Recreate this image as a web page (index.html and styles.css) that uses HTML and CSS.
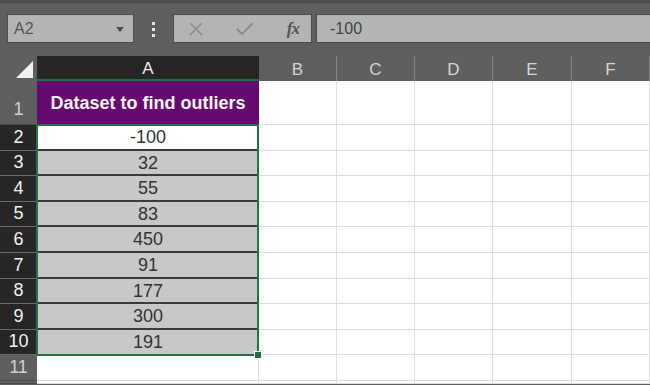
FILE: index.html
```html
<!DOCTYPE html>
<html lang="en">
<head>
    <meta charset="UTF-8">
    <title>Outliers</title>
    <link rel="stylesheet" href="styles.css">
</head>
<body>
    <!-- Name box + formula bar -->
    <div class="toolbar">
        <div class="name-box">
            <span>A2</span>
            <svg class="caret" width="8" height="5" viewBox="0 0 8 5"><path d="M0 0H8L4 5Z" fill="#4a4a4a"/></svg>
        </div>
        <div class="dots"><i></i><i></i><i></i></div>
        <div class="fx-buttons">
            <svg width="16" height="16" viewBox="0 0 16 16"><path d="M2 2L14 14M14 2L2 14" stroke="#8c8c8c" stroke-width="1.6"/></svg>
            <svg width="18" height="16" viewBox="0 0 18 16"><path d="M1 8L6 13L17 2" stroke="#8c8c8c" stroke-width="1.8" fill="none"/></svg>
            <span class="fx">fx</span>
        </div>
        <div class="formula">-100</div>
    </div>

    <div class="sheet">
        <div class="corner"><span></span></div>
        <div class="col-head active">A</div>
        <div class="col-head">B</div>
        <div class="col-head">C</div>
        <div class="col-head">D</div>
        <div class="col-head">E</div>
        <div class="col-head">F</div>

        <div class="row-head tall">1</div>
        <div class="cell title">Dataset to find outliers</div>
        <div class="cell tall"></div><div class="cell tall"></div><div class="cell tall"></div><div class="cell tall"></div><div class="cell tall"></div>

        <div class="row-head sel">2</div>
        <div class="cell val first">-100</div>
        <div class="cell"></div><div class="cell"></div><div class="cell"></div><div class="cell"></div><div class="cell"></div>

        <div class="row-head sel">3</div>
        <div class="cell val">32</div>
        <div class="cell"></div><div class="cell"></div><div class="cell"></div><div class="cell"></div><div class="cell"></div>

        <div class="row-head sel">4</div>
        <div class="cell val">55</div>
        <div class="cell"></div><div class="cell"></div><div class="cell"></div><div class="cell"></div><div class="cell"></div>

        <div class="row-head sel">5</div>
        <div class="cell val">83</div>
        <div class="cell"></div><div class="cell"></div><div class="cell"></div><div class="cell"></div><div class="cell"></div>

        <div class="row-head sel">6</div>
        <div class="cell val">450</div>
        <div class="cell"></div><div class="cell"></div><div class="cell"></div><div class="cell"></div><div class="cell"></div>

        <div class="row-head sel">7</div>
        <div class="cell val">91</div>
        <div class="cell"></div><div class="cell"></div><div class="cell"></div><div class="cell"></div><div class="cell"></div>

        <div class="row-head sel">8</div>
        <div class="cell val">177</div>
        <div class="cell"></div><div class="cell"></div><div class="cell"></div><div class="cell"></div><div class="cell"></div>

        <div class="row-head sel">9</div>
        <div class="cell val">300</div>
        <div class="cell"></div><div class="cell"></div><div class="cell"></div><div class="cell"></div><div class="cell"></div>

        <div class="row-head sel">10</div>
        <div class="cell val last">191</div>
        <div class="cell"></div><div class="cell"></div><div class="cell"></div><div class="cell"></div><div class="cell"></div>

        <div class="row-head">11</div>
        <div class="cell"></div><div class="cell"></div><div class="cell"></div><div class="cell"></div><div class="cell"></div><div class="cell"></div>

        <div class="row-head"></div>
        <div class="cell"></div><div class="cell"></div><div class="cell"></div><div class="cell"></div><div class="cell"></div><div class="cell"></div>

        <!-- selection outline over A2:A10 -->
        <div class="selection"><span class="handle"></span></div>
    </div>
</body>
</html>
```

FILE: styles.css
```css
body {
    margin: 0;
    width: 650px;
    height: 385px;
    overflow: hidden;
    background: #5e5e5e;
    font-family: "Liberation Sans", Arial, sans-serif;
}

/* formula bar */
.toolbar {
    height: 56px;
    border-top: 3px solid #4e4e4e;
    background: #5f5f5f;
    display: flex;
    align-items: flex-start;
    padding: 11px 0 0 7px;
    box-sizing: border-box;
}
.name-box {
    width: 127px;
    height: 29px;
    box-sizing: border-box;
    border: 1px solid #4c4c4c;
    background: #b4b4b4;
    display: flex;
    align-items: center;
    justify-content: space-between;
    padding: 0 9px 0 6px;
    color: #555;
    font-size: 16px;
}
.caret { margin-top: 1px; }
.dots {
    width: 39px;
    display: flex;
    flex-direction: column;
    align-items: center;
    gap: 3px;
    padding-top: 8px;
}
.dots i {
    width: 3px;
    height: 3px;
    background: #e6e6e6;
}
.fx-buttons {
    width: 139px;
    height: 29px;
    box-sizing: border-box;
    border: 1px solid #4c4c4c;
    background: #b4b4b4;
    display: flex;
    align-items: center;
    justify-content: space-between;
    padding: 0 12px 0 14px;
}
.fx {
    font-family: "Liberation Serif", "Times New Roman", serif;
    font-style: italic;
    font-weight: bold;
    font-size: 17px;
    color: #555;
    letter-spacing: -1px;
}
.formula {
    flex: 1;
    margin-left: 4px;
    height: 29px;
    box-sizing: border-box;
    border: 1px solid #4c4c4c;
    border-right: none;
    background: #b4b4b4;
    color: #444;
    font-size: 16px;
    line-height: 27px;
    padding-left: 13px;
}

/* grid */
.sheet {
    position: relative;
    display: grid;
    grid-template-columns: 37px 222px 78px 78px 78px 79px 78px;
    grid-template-rows: 25px 44px repeat(10, 25.6px);
    background: #fff;
}
.corner {
    background: #5f5f5f;
    position: relative;
}
.corner span {
    position: absolute;
    right: 4px;
    bottom: 3px;
    width: 0;
    height: 0;
    border-left: 17px solid transparent;
    border-bottom: 17px solid #f2f2f2;
}
.col-head {
    background: #5f5f5f;
    color: #d4d4d4;
    font-size: 17px;
    display: flex;
    align-items: center;
    justify-content: center;
    border-right: 1px solid #848484;
    padding-top: 2px;
}
.col-head.active {
    background: #262626;
    color: #ececec;
    border-right: none;
    border-bottom: 2px solid #217346;
}
.row-head {
    background: #5f5f5f;
    color: #d0d0d0;
    font-size: 18px;
    display: flex;
    align-items: flex-end;
    justify-content: center;
    padding-bottom: 2px;
    border-bottom: 1px solid #4a4a4a;
    box-sizing: border-box;
}
.row-head.tall { padding-bottom: 4px; }
.row-head.sel {
    background: #262626;
    color: #f2f2f2;
    border-bottom: 1px solid #6a6a6a;
}
.cell {
    border-right: 1px solid #dcdcdc;
    border-bottom: 1px solid #dcdcdc;
    box-sizing: border-box;
}
.cell.title {
    background: #660a70;
    color: #f6f6f6;
    font-weight: bold;
    font-size: 18px;
    display: flex;
    align-items: center;
    justify-content: center;
    border: none;
}
.cell.val {
    background: #c8c8c8;
    color: #333;
    font-size: 18px;
    text-align: center;
    line-height: 25px;
    border-right: none;
    border-bottom: 2px solid #3a3a3a;
}
.cell.first { background: #fff; }
.cell.last { border-bottom: none; }

.selection {
    position: absolute;
    left: 36px;
    top: 68px;
    width: 223px;
    height: 232px;
    border: 2px solid #217346;
    box-sizing: border-box;
    pointer-events: none;
}
.handle {
    position: absolute;
    right: -5px;
    bottom: -5px;
    width: 6px;
    height: 6px;
    background: #217346;
    border: 1px solid #fff;
}
```
